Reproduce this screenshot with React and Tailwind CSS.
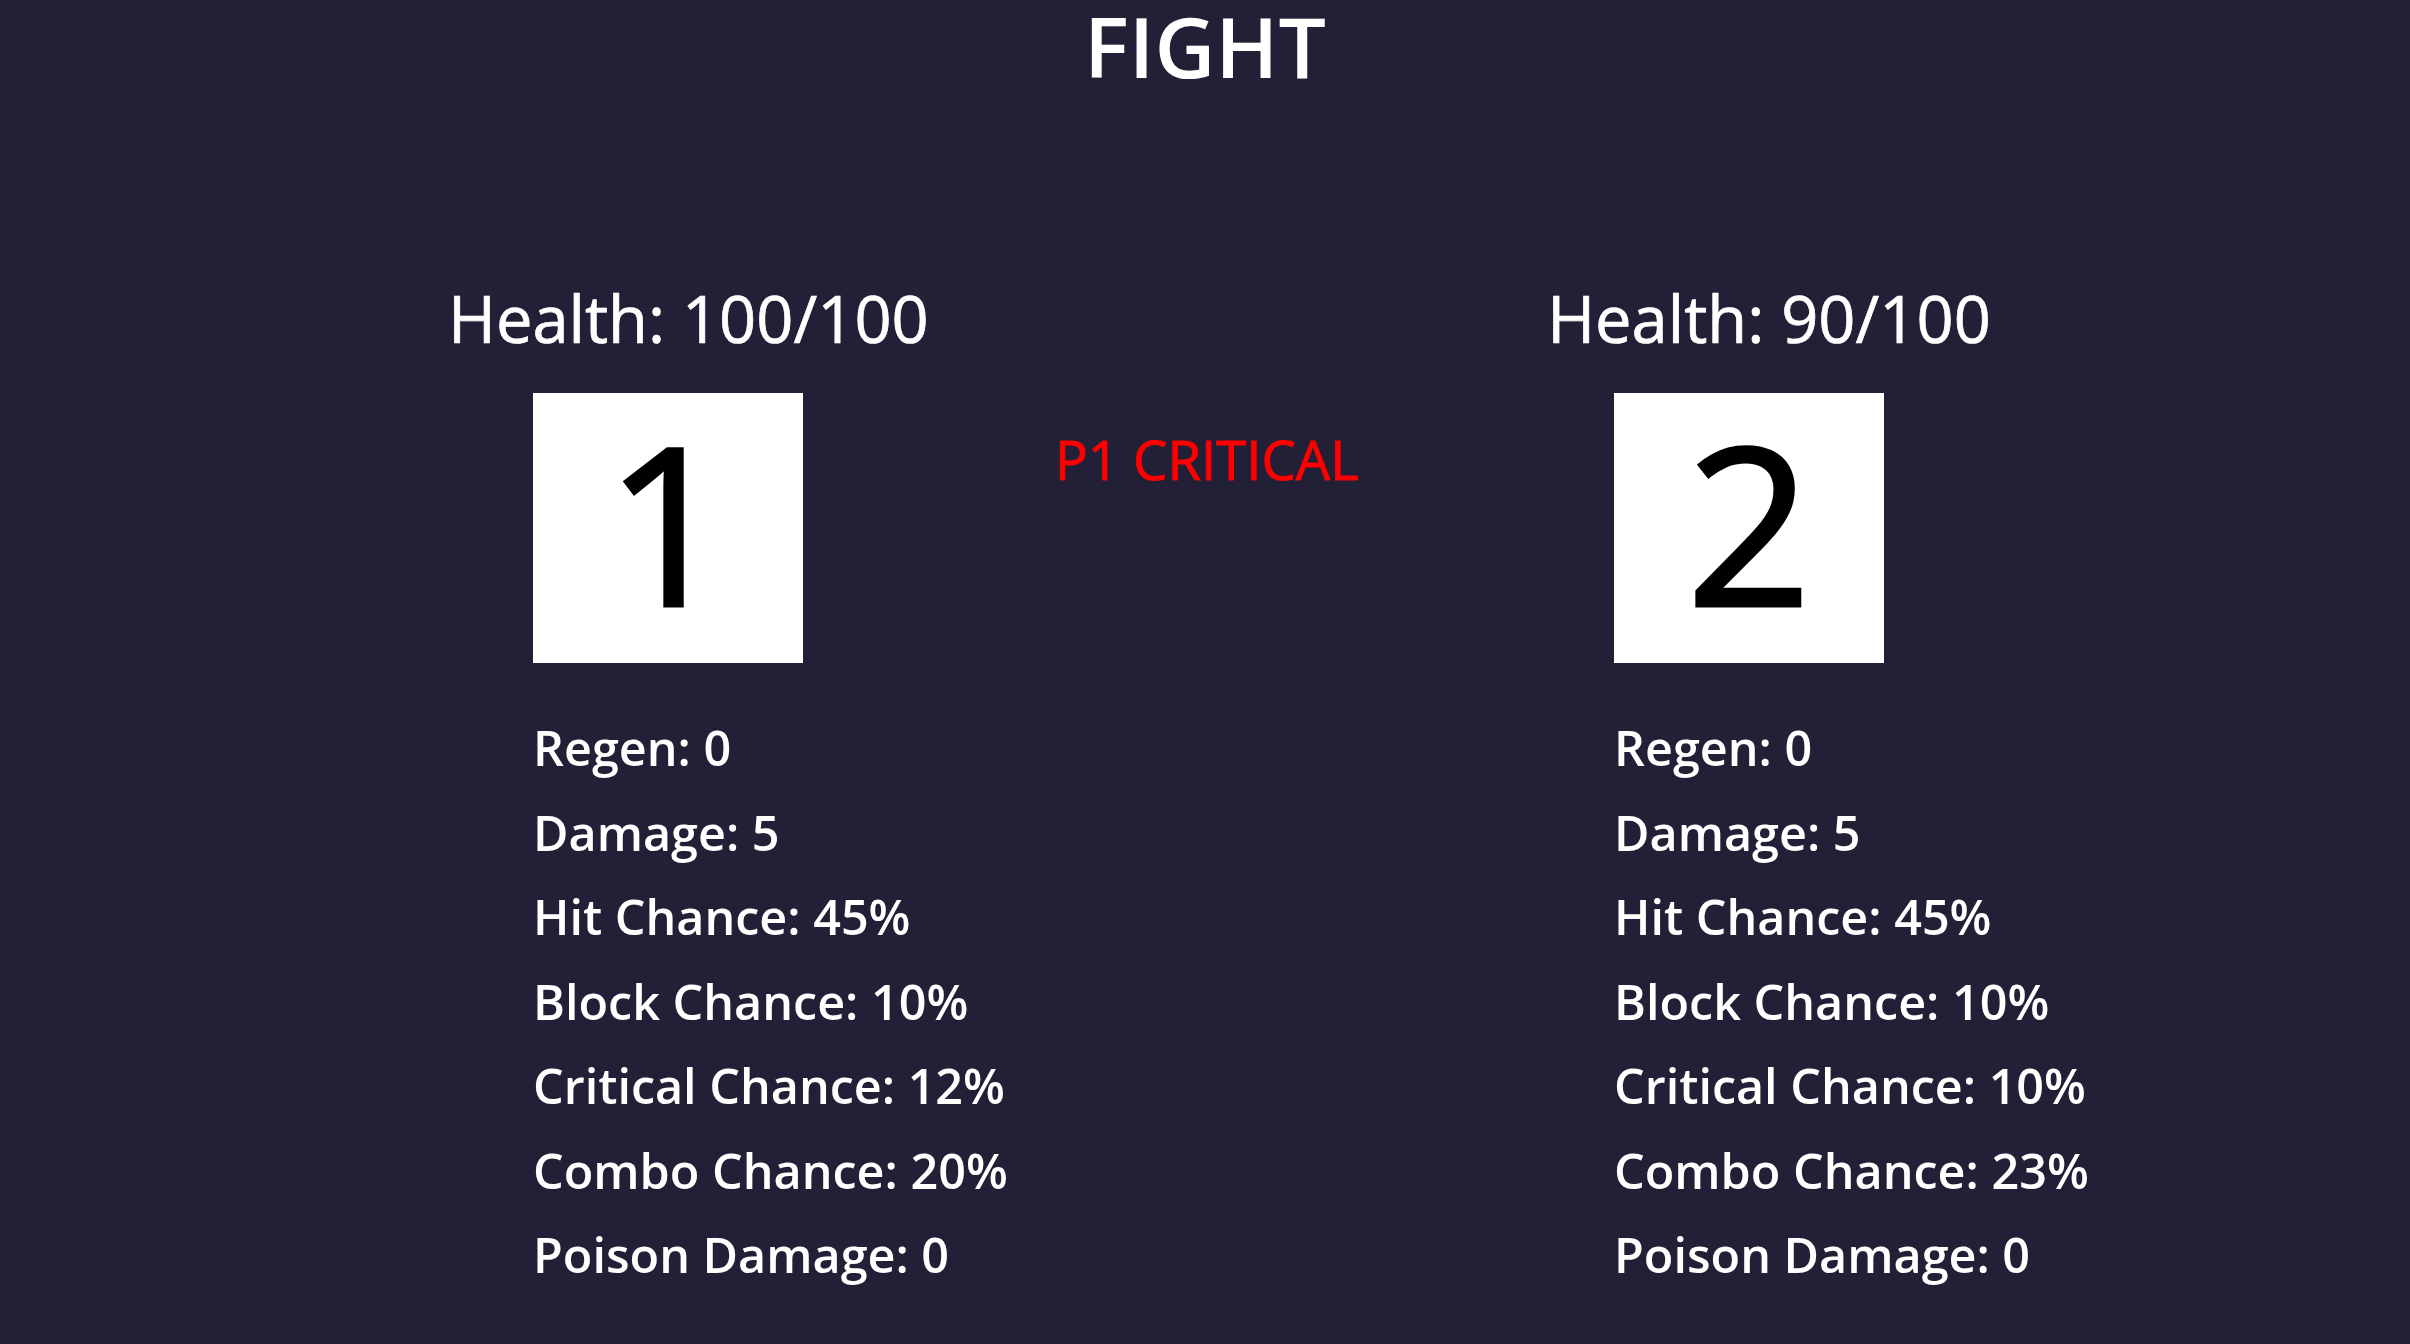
import React from "react";

const font = { fontFamily: '"Open Sans", "Noto Sans", sans-serif' };

function Player({ health, num, stats }) {
  return (
    <div className="flex w-[480px] flex-col">
      <div className="text-center text-[65px] leading-[87px] font-normal text-white whitespace-nowrap [-webkit-text-stroke:0.7px_#ffffff]">
        Health: {health}
      </div>
      <div className="ml-[85px] mt-[31px] flex h-[270px] w-[270px] items-center justify-center bg-white pb-[14px]">
        <span className="text-[220px] leading-none font-normal text-black [-webkit-text-stroke:3px_#000000]">
          {num}
        </span>
      </div>
      <div className="ml-[85px] mt-[42px] flex flex-col">
        {stats.map((s) => (
          <div key={s} className="text-[48.5px] leading-[84.5px] font-semibold text-white whitespace-nowrap">
            {s}
          </div>
        ))}
      </div>
    </div>
  );
}

export default function App() {
  const p1 = [
    "Regen: 0",
    "Damage: 5",
    "Hit Chance: 45%",
    "Block Chance: 10%",
    "Critical Chance: 12%",
    "Combo Chance: 20%",
    "Poison Damage: 0",
  ];
  const p2 = [
    "Regen: 0",
    "Damage: 5",
    "Hit Chance: 45%",
    "Block Chance: 10%",
    "Critical Chance: 10%",
    "Combo Chance: 23%",
    "Poison Damage: 0",
  ];
  return (
    <div className="min-h-screen w-full bg-[#222036]" style={font}>
      <h1 className="pt-[4px] text-center text-[84px] leading-[84px] font-semibold text-white">
        FIGHT
      </h1>
      <div className="mt-[187px] flex pl-[448px]">
        <Player health="100/100" num="1" stats={p1} />
        <div className="w-[601px]">
          <div className="mt-[144px] pl-[127px] text-[54.5px] font-normal text-[#ff0000] whitespace-nowrap [-webkit-text-stroke:1px_#ff0000]">
            P1 CRITICAL
          </div>
        </div>
        <Player health="90/100" num="2" stats={p2} />
      </div>
    </div>
  );
}
